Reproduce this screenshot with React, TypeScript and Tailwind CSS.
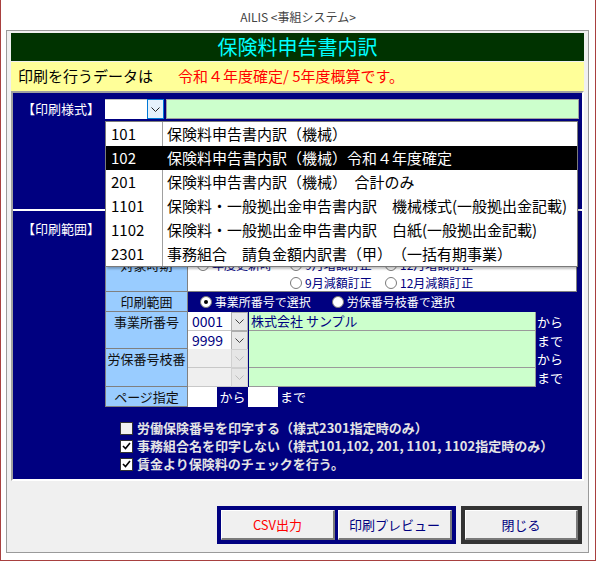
import React from "react";

const styleOptions: [string, string][] = [
  ["101", "保険料申告書内訳（機械）"],
  ["102", "保険料申告書内訳（機械）令和４年度確定"],
  ["201", "保険料申告書内訳（機械）　合計のみ"],
  ["1101", "保険料・一般拠出金申告書内訳　機械様式(一般拠出金記載)"],
  ["1102", "保険料・一般拠出金申告書内訳　白紙(一般拠出金記載)"],
  ["2301", "事務組合　請負金額内訳書（甲）　（一括有期事業）"],
];

function Chevron({ color = "#333" }: { color?: string }) {
  return (
    <svg width="9" height="5" viewBox="0 0 9 5">
      <polyline points="0.5,0.5 4.5,4.5 8.5,0.5" fill="none" stroke={color} strokeWidth="1" />
    </svg>
  );
}

function Radio({ checked }: { checked?: boolean }) {
  return (
    <span className="inline-flex w-[12px] h-[12px] rounded-full bg-white border border-[#7a7a7a] items-center justify-center shrink-0">
      {checked && <span className="w-[4px] h-[4px] rounded-full bg-black" />}
    </span>
  );
}

function Check({ checked }: { checked?: boolean }) {
  return (
    <span
      className={
        checked
          ? "w-[13px] h-[13px] border border-[#333] bg-white flex items-center justify-center shrink-0"
          : "w-[13px] h-[13px] border border-[#333] bg-[#f0f0f0] flex items-center justify-center shrink-0"
      }
    >
      {checked && (
        <svg width="9" height="8" viewBox="0 0 9 8">
          <polyline points="1,4 3.5,6.5 8,1" fill="none" stroke="#000" strokeWidth="1.6" />
        </svg>
      )}
    </span>
  );
}

// one sub-row of 事業所番号 / 労保番号枝番
function PickRow({ code, name, tail, disabled }: { code?: string; name?: string; tail: string; disabled?: boolean }) {
  return (
    <div className="flex h-[19px] items-stretch">
      <div
        className={
          disabled
            ? "w-[43px] bg-[#efefef] border-b border-[#c8c8c8]"
            : "w-[43px] bg-white border-b border-[#c8c8c8] text-[14px] leading-[18px] text-[#000080] pl-[4px]"
        }
      >
        {code}
      </div>
      <div
        className={
          disabled
            ? "w-[17px] bg-[#e6e6e6] border border-[#d0d0d0] flex items-center justify-center"
            : "w-[17px] bg-[#e8e8e8] border border-[#adadad] flex items-center justify-center"
        }
      >
        <Chevron color={disabled ? "#bdbdbd" : "#444"} />
      </div>
      <div className="ml-[1px] w-[287px] bg-[#ccffcc] border-b border-r border-[#9a9a9a] text-[13px] leading-[18px] text-[#000080] pl-[2px]">
        {name}
      </div>
      <div className="pl-[1px] text-[13px] leading-[19px] text-white">{tail}</div>
    </div>
  );
}

export default function App() {
  return (
    <div className="relative w-[596px] h-[561px] bg-white border-x border-b border-[#a8403f] font-['Noto_Sans_CJK_JP',sans-serif]">
      {/* window title */}
      <div className="h-[30px] flex items-center justify-center pt-[4px] text-[12px] text-[#444]">
        AILIS &lt;事組システム&gt;
      </div>

      <div className="ml-[5px] w-[583px] h-[523px] border border-[#9a9a9a] bg-[#f0f0f0] px-[4px] pt-[2px]">
        <div className="h-[28px] bg-[#003300] text-[#00ffff] text-[20px] leading-[28px] text-center">
          保険料申告書内訳
        </div>
        <div className="mt-[1px] h-[29px] bg-[#ffff99] flex items-center pl-[7px] text-[15px]">
          <span className="text-black">印刷を行うデータは</span>
          <span className="ml-[25px] text-[#ff0000]">令和４年度確定/ 5年度概算です。</span>
        </div>

        {/* navy panel */}
        <div className="h-[390px] bg-[#000080] border-2 border-t-[#a0a0a0] border-l-[#a0a0a0] border-r-white border-b-white">
          {/* 印刷様式 */}
          <div className="h-[116px] flex items-start pt-[6px]">
            <div className="w-[92px] pl-[9px] text-[13px] leading-[20px] text-white">【印刷様式】</div>
            <div className="w-[42px] h-[20px] bg-white border-t border-[#c0c0c0]" />
            <div className="w-[17px] h-[20px] bg-[#e5f1fb] border border-[#0078d7] flex items-center justify-center">
              <Chevron color="#222" />
            </div>
            <div className="ml-[2px] mr-[3px] flex-1 h-[20px] bg-[#ccffcc] border border-[#a0a0a0]" />
          </div>
          <div className="h-[2px] bg-white" />

          {/* 印刷範囲 */}
          <div className="h-[268px]">
            <div className="flex items-start">
              <div className="w-[92px] pl-[9px] pt-[8px] text-[13px] leading-[20px] text-white">【印刷範囲】</div>
              <div className="mt-[45px] w-[472px] flex flex-col text-[13px]">
                {/* 対象時期 */}
                <div className="flex h-[36px]">
                  <div className="w-[83px] bg-[#99ccff] border-l border-r border-b border-[#808080] text-center leading-[18px] text-[#111]">
                    対象時期
                  </div>
                  <div className="flex-1 bg-white border-b border-r border-[#808080] text-[12px] text-[#000080]">
                    <div className="flex h-[18px] items-center pl-[9px]">
                      <span className="w-[93px] flex items-center gap-[3px]"><Radio />年度更新時</span>
                      <span className="w-[95px] flex items-center gap-[3px]"><Radio />9月増額訂正</span>
                      <span className="flex items-center gap-[3px]"><Radio />12月増額訂正</span>
                    </div>
                    <div className="flex h-[17px] items-center pl-[102px]">
                      <span className="w-[95px] flex items-center gap-[3px]"><Radio />9月減額訂正</span>
                      <span className="flex items-center gap-[3px]"><Radio />12月減額訂正</span>
                    </div>
                  </div>
                </div>

                {/* 印刷範囲 */}
                <div className="flex h-[20px]">
                  <div className="w-[83px] bg-[#99ccff] border-l border-r border-b border-[#808080] text-center leading-[19px] text-[#111]">
                    印刷範囲
                  </div>
                  <div className="flex-1 flex items-center pl-[12px] text-[12px] text-white">
                    <span className="w-[132px] flex items-center gap-[0px]"><Radio checked /><span className="ml-[0px] pl-[0px]">&nbsp;事業所番号で選択</span></span>
                    <span className="flex items-center"><Radio /><span>&nbsp;労保番号枝番で選択</span></span>
                  </div>
                </div>

                {/* 事業所番号 */}
                <div className="flex h-[37px]">
                  <div className="w-[83px] bg-[#99ccff] border-l border-r border-b border-[#808080] text-center leading-[19px] text-[#111]">
                    事業所番号
                  </div>
                  <div className="flex-1 flex flex-col">
                    <PickRow code="0001" name="株式会社 サンプル" tail="から" />
                    <PickRow code="9999" tail="まで" />
                  </div>
                </div>

                {/* 労保番号枝番 */}
                <div className="flex h-[38px]">
                  <div className="w-[83px] bg-[#99ccff] border-l border-r border-b border-[#808080] text-center leading-[19px] text-[#111]">
                    労保番号枝番
                  </div>
                  <div className="flex-1 flex flex-col">
                    <PickRow disabled tail="から" />
                    <PickRow disabled tail="まで" />
                  </div>
                </div>

                {/* ページ指定 */}
                <div className="flex h-[20px]">
                  <div className="w-[83px] bg-[#99ccff] border-l border-r border-b border-[#808080] text-center leading-[19px] text-[#111]">
                    ページ指定
                  </div>
                  <div className="flex-1 flex items-stretch text-white">
                    <div className="w-[29px] bg-white" />
                    <div className="w-[31px] text-center leading-[19px]">から</div>
                    <div className="w-[30px] bg-white" />
                    <div className="pl-[2px] leading-[19px]">まで</div>
                  </div>
                </div>
              </div>
            </div>

            <div className="mt-[12px] pl-[107px] flex flex-col text-[13px] font-bold text-[#e4e4e4]">
              <div className="h-[18px] flex items-center gap-[4px]">
                <Check />
                <span>労働保険番号を印字する（様式2301指定時のみ）</span>
              </div>
              <div className="h-[18px] flex items-center gap-[4px]">
                <Check checked />
                <span>事務組合名を印字しない（様式101,102, 201, 1101, 1102指定時のみ）</span>
              </div>
              <div className="h-[18px] flex items-center gap-[4px]">
                <Check checked />
                <span>賃金より保険料のチェックを行う。</span>
              </div>
            </div>
          </div>
        </div>

        {/* buttons */}
        <div className="mt-[25px] flex justify-end gap-[5px] pr-[2px]">
          <div className="w-[239px] h-[38px] bg-[#000080] p-[4px] flex gap-[3px]">
            <button className="flex-1 bg-[#f0f0f0] border-t border-l border-r-2 border-b-2 border-t-white border-l-white border-r-[#7a7a7a] border-b-[#7a7a7a] text-[13px] text-[#ff0000]">
              CSV出力
            </button>
            <button className="flex-1 bg-[#f0f0f0] border-t border-l border-r-2 border-b-2 border-t-white border-l-white border-r-[#7a7a7a] border-b-[#7a7a7a] text-[13px] text-[#000080]">
              印刷プレビュー
            </button>
          </div>
          <div className="w-[121px] h-[38px] bg-[#333] p-[4px] flex">
            <button className="flex-1 bg-[#f0f0f0] border-t border-l border-r-2 border-b-2 border-t-white border-l-white border-r-[#7a7a7a] border-b-[#7a7a7a] text-[13px] text-[#000080]">
              閉じる
            </button>
          </div>
        </div>
      </div>

      {/* open dropdown list of 印刷様式 */}
      <div className="absolute left-[104px] top-[121px] w-[473px] bg-white border border-[#7a7a7a] shadow-[2px_2px_2px_rgba(0,0,0,0.25)] text-[15px]">
        {styleOptions.map(([code, name]) => (
          <div
            key={code}
            className={code === "102" ? "flex h-[24px] items-center bg-black text-white" : "flex h-[24px] items-center text-black"}
          >
            <div
              className={
                code === "102"
                  ? "w-[57px] h-full pl-[5px] leading-[24px] border-r border-black"
                  : "w-[57px] h-full pl-[5px] leading-[24px] border-r border-[#a0a0a0]"
              }
            >
              {code}
            </div>
            <div className="pl-[4px] whitespace-nowrap">{name}</div>
          </div>
        ))}
      </div>
    </div>
  );
}
